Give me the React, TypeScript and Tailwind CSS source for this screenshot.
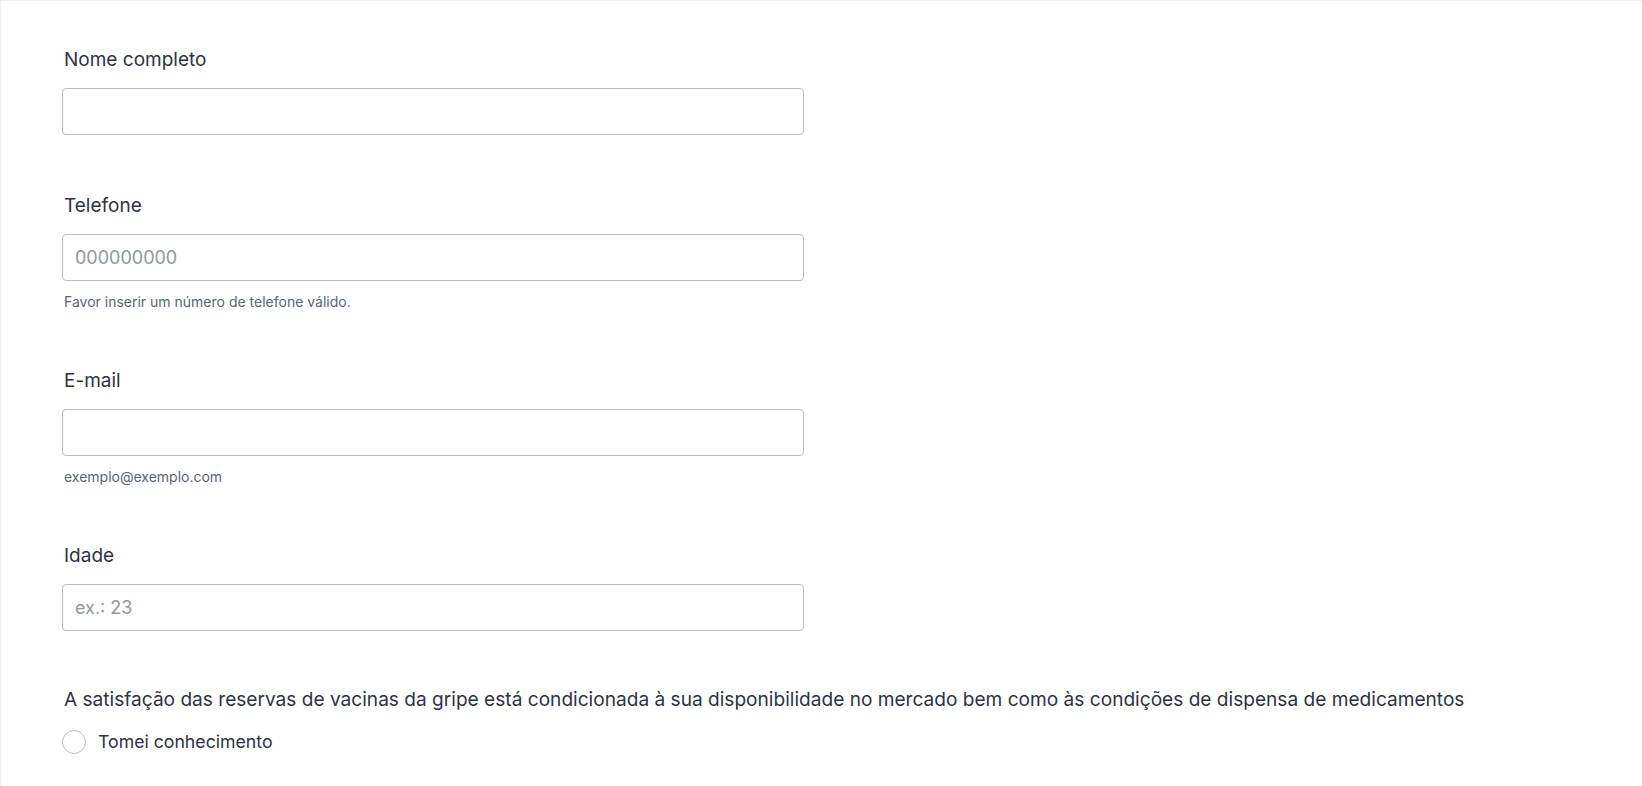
const Field = ({
  label,
  placeholder,
  hint,
  className = "",
}: {
  label: string;
  placeholder?: string;
  hint?: string;
  className?: string;
}) => {
  return (
    <div className={className}>
      <label className="block pl-[2px] text-[19px] leading-[28px] text-[#2c3345]">
        {label}
      </label>
      <input
        type="text"
        placeholder={placeholder}
        className="mt-[14px] block h-[47px] w-[742px] rounded-[4px] border border-[#b8bdc9] bg-white px-[12px] text-[18px] text-[#2c3345] placeholder:text-[#8f96a8] outline-none"
      />
      {hint && (
        <p className="mt-[11px] pl-[2px] text-[14px] leading-[20px] text-[#57647e]">
          {hint}
        </p>
      )}
    </div>
  );
};

export default function App() {
  return (
    <div
      className="h-[786px] w-full overflow-hidden border-l border-t border-[#eceff4] bg-white"
      style={{ fontFamily: "Inter, 'Noto Sans', sans-serif" }}
    >
      <div className="pl-[61px] pt-[45px]">
        <Field label="Nome completo" className="mb-[57px]" />
        <Field
          label="Telefone"
          placeholder="000000000"
          hint="Favor inserir um número de telefone válido."
          className="mb-[55px]"
        />
        <Field
          label="E-mail"
          hint="exemplo@exemplo.com"
          className="mb-[55px]"
        />
        <Field label="Idade" placeholder="ex.: 23" className="mb-[54px]" />
        <p className="pl-[2px] text-[19.1px] leading-[28px] text-[#2c3345]">
          A satisfação das reservas de vacinas da gripe está condicionada à sua
          disponibilidade no mercado bem como às condições de dispensa de
          medicamentos
        </p>
        <label className="mt-[15px] flex items-center gap-[12px]">
          <span className="h-[24px] w-[24px] rounded-full border border-[#b8bdc9] bg-white" />
          <span className="text-[17.7px] leading-[28px] text-[#2c3345]">
            Tomei conhecimento
          </span>
        </label>
      </div>
    </div>
  );
}
